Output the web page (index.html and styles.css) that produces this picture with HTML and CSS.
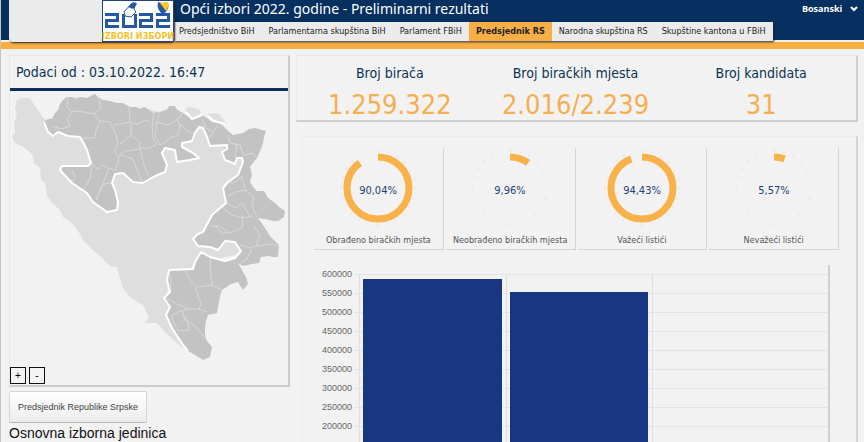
FILE: index.html
```
<!DOCTYPE html>
<html lang="bs">
<head>
    <meta charset="UTF-8">
    <meta name="viewport" content="width=device-width, initial-scale=1.0">
    <title>Opći izbori 2022. godine</title>
    <link rel="stylesheet" href="styles.css">
</head>
<body>
    <header class="header">
        <div class="logo">
            <svg viewBox="0 0 72 42" width="72" height="42" role="img" aria-label="Izbori 2022">
                <rect width="72" height="42" fill="#1f4288"/>
                <rect x="1" y="1" width="70" height="40" fill="#fff"/>
                <g fill="none" stroke="#2458a6" stroke-width="3">
                    <path d="M3 14.5H15.500V20.500H4.500V26.500H17"/>
                    <path d="M21.500 14V26.500H33.500V14"/>
                    <path d="M37 14.500H49.500V20.500H38.500V26.500H51"/>
                    <path d="M54 14.500H66.500V20.500H55.500V26.500H68"/>
                </g>
                <path d="M22 12L29 4L34 3L32 9L34 12L29 17L23 16Z" fill="#fff" stroke="#2458a6" stroke-width="1"/>
                <path d="M26 7L31 2L35 4L31 9Z" fill="#2458a6"/>
                <path d="M56 2Q61 4 66 2Q68 10 61 14Q54 10 56 2Z" fill="#2b56a0"/>
                <path d="M58 3L66 2Q67 8 64 11Z" fill="#f5c920"/>
                <text x="36" y="39" class="logo-text">IZBORI ИЗБОРИ</text>
            </svg>
        </div>
        <div class="header-main">
            <div class="title-row">
                <h1>Opći izbori 2022. godine - Preliminarni rezultati</h1>
                <div class="language">
                    <select aria-label="Jezik">
                        <option>Bosanski</option>
                        <option>Hrvatski</option>
                        <option>Srpski</option>
                    </select>
                    <svg viewBox="0 0 8 6" width="8" height="6"><path d="M1 1L4 4L7 1" fill="none" stroke="#fff" stroke-width="2"/></svg>
                </div>
            </div>
            <nav class="nav-links">
                <a href="#">Predsjedništvo BiH</a>
                <a href="#">Parlamentarna skupština BiH</a>
                <a href="#">Parlament FBiH</a>
                <a href="#" class="active">Predsjednik RS</a>
                <a href="#">Narodna skupština RS</a>
                <a href="#">Skupštine kantona u FBiH</a>
            </nav>
        </div>
    </header>

    <main class="content">
        <section class="side">
            <div class="map-card">
                <h2>Podaci od : 03.10.2022. 16:47</h2>
                <svg class="map" viewBox="10 91 278 276" role="img" aria-label="Mapa">
                    <!-- whole country -->
                    <path class="land" d="M15 108L17 100L23 98L30 98L33 103L40 113L45 120L52 118L58 110L63 100L72 97L87 98L95 94L103 100L117 103L130 107L148 109L160 112L172 106L183 113L192 119L202 115L212 122L223 125L248 160L240 190L235 210L250 252L201 262L170 280L166 298L170 307L166 315L172 328L188 352L173 340L163 330L157 323L144 323L149 318L143 305L130 297L123 288L119 275L117 267L110 266L102 258L93 250L83 240L80 234L72 223L63 217L60 210L52 203L47 195L45 183L41 180L40 168L34 163L33 155L27 150L22 146L15 143L12 137L15 132L14 123L17 115Z"/>
                    <path class="land" d="M186 108L191 107L200 110L201 114L192 118L186 112ZM207 114L213 113L219 114L226 123L219 122L211 119Z"/>
                    <!-- Republika Srpska -->
                    <path class="entity" d="M44 122L48 119L52 119L55 113L58 110L60 104L63 100L67 97L72 97L75 99L80 97L87 98L91 96L95 94L98 98L103 100L110 101L117 103L123 103L130 107L136 107L140 109L144 107L148 109L153 113L160 112L167 110L169 106L175 106L177 110L183 113L192 119L202 115L207 118L212 122L219 123L223 126L227 130L233 135L243 133L249 129L255 128L266 131L264 137L263 143L261 149L257 158L253 163L250 167L252 175L250 182L253 187L257 191L264 191L268 198L275 203L279 207L285 211L284 217L278 221L273 221L265 219L258 218L263 225L270 236L279 245L278 257L273 257L268 256L261 257L259 263L252 264L243 266L238 263L242 270L246 277L248 284L243 290L238 282L231 284L222 290L220 296L219 302L217 313L208 315L206 321L205 328L205 335L207 341L212 347L210 357L203 360L195 355L188 351L183 345L172 328L166 315L170 307L164 298L170 292L167 280L169 270L193 269L195 262L201 252L210 257L225 261L235 258L241 251L235 242L225 241L218 250L210 247L198 246L193 239L198 234L203 232L212 215L226 203L223 188L228 182L238 175L243 162L242 158L237 158L235 164L225 160L222 152L227 146L210 146L207 137L203 128L199 127L195 133L192 141L182 143L182 147L199 158L190 160L177 162L175 150L165 148L162 153L167 165L165 172L155 176L143 183L133 182L123 173L115 174L112 183L115 190L118 202L117 210L107 212L93 202L87 193L72 183L60 170L62 166L88 166L91 163L87 150L83 142L80 137L68 136L58 132L53 136L48 132Z"/>
                    <!-- municipality lines -->
                    <path class="districts" d="M68 97L67 107L72 112L67 119L70 126L61 129L52 126M72 111L84 112L94 114L101 108L99 100M94 114L100 122L96 130L95 138L83 138M100 121L110 122L116 135L118 144L115 151L119 158L116 170L108 168L103 165L98 169L91 163M115 125L130 122L129 107M130 122L137 124L145 120L150 122M131 124L131 135L120 144M131 135L140 142L139 149L125 151L118 156M140 148L149 148L156 145L153 137L152 124L154 113M120 155L133 159L139 175L143 183M140 149L144 165L148 175M72 170L75 177L72 183M92 166L90 179L84 189M109 168L105 178L96 200M96 200L103 184L112 183M160 112L157 122L152 126M157 122L168 125L177 120L183 113M157 123L155 136L160 145L172 137L178 135L180 124L186 130L194 134M178 120L180 126M202 119L206 128L213 132L210 138L207 137M213 132L218 125M228 135L230 143L237 145L235 158M231 143L240 145L243 155L252 153L258 158M228 182L234 183L243 176M228 196L236 192L245 190L254 198L252 206L257 217M241 176L246 191M226 203L236 208L242 203L251 218M222 207L232 215L242 218L253 216M210 226L220 226L229 233L242 228L243 216M216 226L222 234L229 232M253 225L260 235L256 246L250 248L240 245M255 246L270 244L279 246M252 249L246 260L240 263M211 257L210 266L212 285L222 290M169 270L171 281L170 292M185 269L189 278L194 284L197 287L212 285M195 287L198 296L201 303L199 309L188 309L177 304L166 298M199 309L207 312M188 309L182 311L185 320L196 327L206 339M182 310L171 316L178 331L189 330L188 322L184 316"/>
                    <path class="border-line" d="M188 351L183 345L172 328L166 315L170 307L164 298L170 292L167 280L169 270L193 269L195 262L201 252L210 257L225 261L235 258L241 251L235 242L225 241L218 250L210 247L198 246L193 239L198 234L203 232L212 215L226 203L223 188L228 182L238 175L243 162L242 158L237 158L235 164L225 160L222 152L227 149L227 145L210 146L207 137L203 128L199 127L195 133L192 141L182 143L182 147L193 153L199 158L190 160L177 162L175 150L165 148L162 153L167 165L165 172L155 176L143 183L133 182L123 173L115 174L112 183L115 190L118 202L117 210L107 212L93 202L87 193L72 183L60 170L62 166L88 166L91 163L87 150L83 142L80 137L68 136L58 132L53 136L48 132L44 122"/>
                    <path class="border-line" d="M186 112L192 119L202 115M208 116L214 121L225 124"/>
                </svg>
                <div class="zoom">
                    <button type="button">+</button>
                    <button type="button">-</button>
                </div>
            </div>
            <button type="button" class="race-btn">Predsjednik Republike Srpske</button>
            <h3>Osnovna izborna jedinica</h3>
        </section>

        <section class="results">
            <div class="stats">
                <div class="stat">
                    <h2>Broj birača</h2>
                    <p>1.259.322</p>
                </div>
                <div class="stat">
                    <h2>Broj biračkih mjesta</h2>
                    <p>2.016/2.239</p>
                </div>
                <div class="stat">
                    <h2>Broj kandidata</h2>
                    <p>31</p>
                </div>
            </div>

            <div class="charts">
                <div class="gauges">
                    <div class="gauge">
                        <svg viewBox="0 0 80 80">
                            <circle class="ticks" cx="40" cy="40" r="37" pathLength="120"/>
                            <circle class="arc" cx="40" cy="40" r="31" pathLength="100" stroke-dasharray="90.04 100"/>
                            <text x="40" y="46">90,04%</text>
                        </svg>
                        <p>Obrađeno biračkih mjesta</p>
                    </div>
                    <div class="gauge">
                        <svg viewBox="0 0 80 80">
                            <circle class="ticks" cx="40" cy="40" r="37" pathLength="120"/>
                            <circle class="arc" cx="40" cy="40" r="31" pathLength="100" stroke-dasharray="9.96 100"/>
                            <text x="40" y="46">9,96%</text>
                        </svg>
                        <p>Neobrađeno biračkih mjesta</p>
                    </div>
                    <div class="gauge">
                        <svg viewBox="0 0 80 80">
                            <circle class="ticks" cx="40" cy="40" r="37" pathLength="120"/>
                            <circle class="arc" cx="40" cy="40" r="31" pathLength="100" stroke-dasharray="94.43 100"/>
                            <text x="40" y="46">94,43%</text>
                        </svg>
                        <p>Važeći listići</p>
                    </div>
                    <div class="gauge">
                        <svg viewBox="0 0 80 80">
                            <circle class="ticks" cx="40" cy="40" r="37" pathLength="120"/>
                            <circle class="arc" cx="40" cy="40" r="31" pathLength="100" stroke-dasharray="5.57 100"/>
                            <text x="40" y="46">5,57%</text>
                        </svg>
                        <p>Nevažeći listići</p>
                    </div>
                </div>

                <div class="bar-chart">
                    <ul class="axis">
                        <li>600000</li>
                        <li>550000</li>
                        <li>500000</li>
                        <li>450000</li>
                        <li>400000</li>
                        <li>350000</li>
                        <li>300000</li>
                        <li>250000</li>
                        <li>200000</li>
                        <li>150000</li>
                        <li>100000</li>
                        <li>50000</li>
                        <li>0</li>
                    </ul>
                    <div class="plot">
                        <div class="column"><div class="bar" style="height: 97.8%"></div></div>
                        <div class="column"><div class="bar" style="height: 92.3%"></div></div>
                        <div class="column"></div>
                    </div>
                </div>
            </div>
        </section>
    </main>
</body>
</html>
```
FILE: styles.css
```
* {
    margin: 0;
    padding: 0;
    box-sizing: border-box;
}

body {
    height: 100vh;
    overflow: hidden;
    background-color: #f2f2f2;
    border-left: 1px solid #c4c4c4;
    font-family: "DejaVu Sans Condensed", "Noto Sans", sans-serif;
    color: #0b3454;
}

/* header */
.header {
    display: flex;
    height: 49px;
    padding-left: 8px;
    background: linear-gradient(#05305f 40px, #f6f1e8 40px, #f6f1e8 42px, #f6ae45 42px);
}

.logo {
    display: flex;
    justify-content: flex-end;
    width: 165px;
    height: 42px;
    background-color: #ebebeb;
    border-radius: 0 0 4px 4px;
    box-shadow: 1px 1px 2px #222;
    z-index: 1;
}

.logo-text {
    font: bold 9px "DejaVu Sans Condensed", sans-serif;
    fill: #f3c12c;
    text-anchor: middle;
}

.header-main {
    flex: 1;
}

.title-row {
    display: flex;
    justify-content: space-between;
    height: 22px;
    padding: 0 6px;
    color: #fff;
}

.title-row h1 {
    font-family: "Noto Sans", sans-serif;
    font-size: 14px;
    font-weight: normal;
    line-height: 17px;
}

.language {
    display: flex;
    align-items: center;
    gap: 7px;
    height: 17px;
}

.language select {
    appearance: none;
    border: none;
    background: none;
    color: #fff;
    font: bold 9px "Open Sans", sans-serif;
}

.nav-links {
    display: flex;
    width: fit-content;
    height: 19px;
    background-color: #ebebeb;
    box-shadow: 1px 1px 2px #222;
}

.nav-links a {
    padding: 0 7px;
    font-size: 9px;
    line-height: 19px;
    color: #222;
    text-decoration: none;
    white-space: nowrap;
}

.nav-links a:first-child {
    padding-left: 5px;
}

.nav-links .active {
    background-color: #f6ae45;
    font-weight: bold;
}

/* layout */
.content {
    display: grid;
    grid-template-columns: 1fr 2fr;
    gap: 6px;
    padding: 6px 6px 0 8px;
}

h2 {
    font-size: 14px;
    font-weight: normal;
}

/* map */
.map-card {
    border: 1px solid #e6e6e6;
    border-right: 2px solid #ccc;
    border-bottom: 2px solid #ccc;
}

.map-card h2 {
    padding-left: 6px;
    line-height: 32px;
    border-bottom: 3px solid #0a2d5c;
}

.map {
    display: block;
    width: 100%;
}

.land {
    fill: #dedede;
}

.entity {
    fill: #c3c3c3;
}

.districts {
    fill: none;
    stroke: #d9d9d9;
    stroke-width: 1;
}

.border-line {
    fill: none;
    stroke: #fff;
    stroke-width: 2;
    stroke-linejoin: round;
}

.zoom {
    display: flex;
    gap: 3px;
    height: 18px;
}

.zoom button {
    width: 16px;
    height: 17px;
    border: 1px solid #111;
    background-color: #f4f4f4;
    font: 10px "Liberation Sans", sans-serif;
}

.race-btn {
    display: block;
    margin-top: 4px;
    height: 32px;
    padding: 0 8px;
    border: 1px solid #d4d4d4;
    border-bottom-color: #b8b8b8;
    border-radius: 2px;
    background: linear-gradient(#fff, #ececec);
    color: #444;
    font: 9px "Liberation Sans", sans-serif;
}

h3 {
    font: 14px/20px "Liberation Sans", sans-serif;
    color: #111;
}

/* numbers */
.stats {
    display: grid;
    grid-template-columns: 1fr 1fr 1fr;
    height: 67px;
    padding: 7px 2px 0 0;
    border: 1px solid #e9e9e9;
    border-right: 2px solid #d0d0d0;
    border-bottom: 2px solid #d0d0d0;
    text-align: center;
}

.stats h2 {
    line-height: 20px;
}

.stats p {
    font-size: 27px;
    line-height: 44px;
    color: #f6ae4f;
}

/* charts */
.charts {
    margin: 14px 0 0 6px;
    padding: 11px 17px 0 11px;
    border: 1px solid #ececec;
    border-right: 2px solid #d4d4d4;
}

.gauges {
    display: grid;
    grid-template-columns: repeat(4, 1fr);
    gap: 2px;
}

.gauge {
    height: 102px;
    border-right: 1px solid #d4d4d4;
    border-bottom: 1px solid #d4d4d4;
    text-align: center;
}

.gauge svg {
    display: block;
    width: 80px;
    height: 80px;
    margin: 0 auto;
}

.gauge circle {
    fill: none;
    transform: rotate(-90deg);
    transform-origin: center;
}

.ticks {
    stroke: #e8e8e8;
    stroke-width: 2;
    stroke-dasharray: 1 4;
}

.arc {
    stroke: #f9b14a;
    stroke-width: 7;
}

.gauge text {
    font-size: 11px;
    fill: #253f73;
    text-anchor: middle;
}

.gauge p {
    font-size: 9px;
    line-height: 24px;
    color: #555;
    white-space: nowrap;
}

.bar-chart {
    display: flex;
    margin: 15px 9px 0 8px;
    border-right: 2px solid #d0d0d0;
}

.axis {
    width: 28px;
    list-style: none;
    font: 9px/19px "Liberation Sans", sans-serif;
    color: #666;
    text-align: right;
}

.plot {
    flex: 1;
    display: grid;
    grid-template-columns: 5fr 5fr 6fr;
    height: 229px;
    margin: 9px 0 0 4px;
    padding-left: 5px;
    background: repeating-linear-gradient(#e4e4e4 0 1px, transparent 1px 19px);
}

.column {
    display: flex;
    align-items: flex-end;
    border-left: 1px solid #e0e0e0;
}

.bar {
    flex: 1;
    margin: 0 4px 0 3px;
    background-color: #183683;
}
```
